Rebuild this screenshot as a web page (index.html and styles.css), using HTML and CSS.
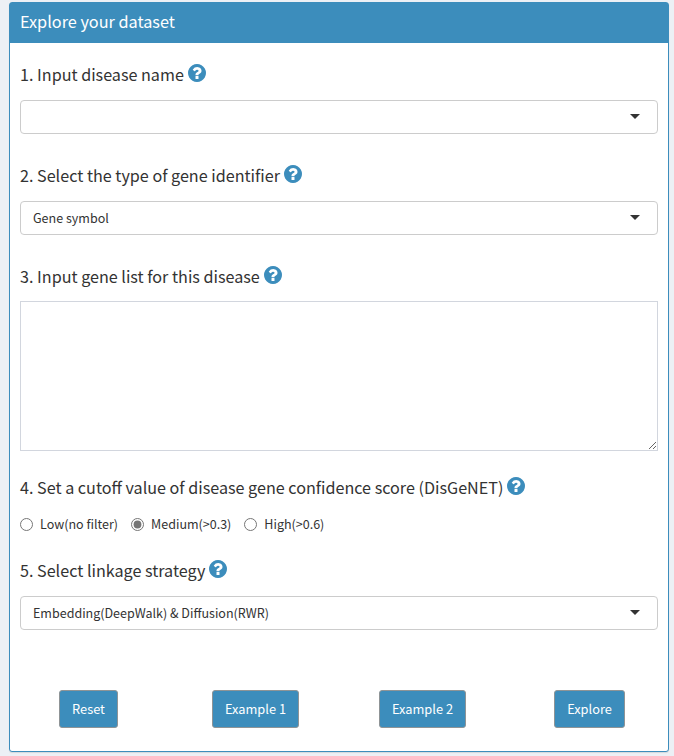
FILE: index.html
```html
<!DOCTYPE html>
<html lang="en">
<head>
<meta charset="utf-8">
<title>Explore your dataset</title>
<link rel="stylesheet" href="styles.css">
</head>
<body>
<svg class="sprite" aria-hidden="true">
  <symbol id="help" viewBox="128 128 1536 1536"><path d="M1024 1376v-192q0-14-9-23t-23-9h-192q-14 0-23 9t-9 23v192q0 14 9 23t23 9h192q14 0 23-9t9-23zm256-672q0-88-55.500-163t-138.500-116-170-41q-243 0-371 213-15 24 8 42l132 100q7 6 19 6 16 0 25-12 53-68 86-92 34-24 86-24 48 0 85.500 26t37.500 59q0 38-20 61t-68 45q-63 28-115.500 86.500t-52.500 125.500v36q0 14 9 23t23 9h192q14 0 23-9t9-23q0-19 21.500-49.500t54.500-49.500q32-18 49-28.500t46-35 44.500-48 28-60.500 12.500-81zm384 192q0 209-103 385.500t-279.500 279.500-385.500 103-385.500-103-279.500-279.500-103-385.500 103-385.500 279.500-279.500 385.500-103 385.500 103 279.500 279.500 103 385.500z"/></symbol>
</svg>
<section class="box">
  <header class="box-header"><h3>Explore your dataset</h3></header>
  <form class="box-body">
    <div class="field">
      <h4><span>1. Input disease name</span><svg class="help"><use href="#help"/></svg></h4>
      <div class="select"><span></span><i class="caret"></i></div>
    </div>
    <div class="field">
      <h4><span>2. Select the type of gene identifier</span><svg class="help"><use href="#help"/></svg></h4>
      <div class="select"><span>Gene symbol</span><i class="caret"></i></div>
    </div>
    <div class="field field-genes">
      <h4><span>3. Input gene list for this disease</span><svg class="help"><use href="#help"/></svg></h4>
      <textarea></textarea>
    </div>
    <div class="field field-cutoff">
      <h4><span>4. Set a cutoff value of disease gene confidence score (DisGeNET)</span><svg class="help"><use href="#help"/></svg></h4>
      <div class="radios">
        <label><input type="radio" name="cutoff"><span>Low(no filter)</span></label>
        <label><input type="radio" name="cutoff" checked><span>Medium(&gt;0.3)</span></label>
        <label><input type="radio" name="cutoff"><span>High(&gt;0.6)</span></label>
      </div>
    </div>
    <div class="field field-strategy">
      <h4><span>5. Select linkage strategy</span><svg class="help"><use href="#help"/></svg></h4>
      <div class="select"><span>Embedding(DeepWalk) &amp; Diffusion(RWR)</span><i class="caret"></i></div>
    </div>
    <div class="actions">
      <button type="button" class="btn reset">Reset</button>
      <button type="button" class="btn example">Example 1</button>
      <button type="button" class="btn example">Example 2</button>
      <button type="button" class="btn explore">Explore</button>
    </div>
  </form>
</section>
</body>
</html>
```
FILE: styles.css
```css
* { box-sizing: border-box; }
body {
  margin: 0;
  height: 756px;
  padding: 2px 5px 4px 9px;
  overflow: hidden;
  background: #ecf0f5;
  color: #333;
  font-family: "Noto Sans CJK SC", sans-serif;
  font-size: 12.52px;
}
.sprite { display: none; }
.box {
  width: 660px;
  height: 750px;
  border: 1px solid #3c8dbc;
  border-radius: 3px;
  background: #fff;
  box-shadow: 0 1px 1px rgba(0, 0, 0, .1);
}
.box-header {
  height: 40px;
  padding: 8px 10px;
  background: #3c8dbc;
  color: #fff;
}
h3, h4 {
  margin: 0;
  font-size: 16.15px;
  font-weight: 400;
  line-height: 20px;
  white-space: nowrap;
}
h3 { font-size: 16.25px; }
.box-body { padding: 22px 10px 0; }
.field { margin-bottom: 32px; }
h4 {
  display: flex;
  align-items: flex-start;
  gap: 4px;
  height: 20px;
  margin-bottom: 15px;
}
h4 span { margin-top: -1px; }
.help {
  width: 18px;
  height: 18px;
  margin-top: -1px;
  fill: #3c8dbc;
}
.select {
  display: flex;
  align-items: center;
  justify-content: space-between;
  height: 34px;
  padding: 0 17px 0 12px;
  border: 1px solid #ccc;
  border-radius: 4px;
  line-height: 20px;
}
.caret {
  margin-bottom: 1px;
  border: 5px solid transparent;
  border-top-color: #333;
  border-bottom: 0;
}
.field-genes { margin-bottom: 27px; }
.field-genes h4 { margin-bottom: 14px; }
textarea {
  display: block;
  width: 100%;
  height: 150px;
  border: 1px solid #d2d6de;
  background: #fff;
  resize: vertical;
}
.field-cutoff { margin-bottom: 30px; }
.field-cutoff h4 { margin-bottom: 20px; }
.radios {
  display: flex;
  gap: 13px;
  height: 13px;
}
.radios label {
  display: flex;
  align-items: center;
  gap: 7px;
}
.radios input { width: 13px; height: 13px; margin: 0; accent-color: #757575; }
.radios span { margin-bottom: 2px; line-height: 13px; white-space: nowrap; }
.field-strategy { margin-bottom: 60px; }
.actions {
  display: flex;
  padding-left: 39px;
}
.btn {
  height: 38px;
  padding: 0 0 2px;
  border: 1px solid #8f9496;
  border-radius: 3px;
  background: #3c8dbc;
  color: #fff;
  font: inherit;
  font-size: 12.8px;
}
.reset { width: 59px; margin-right: 94px; }
.example { width: 87px; margin-right: 80px; }
.explore { width: 71px; margin-left: 8px; }
```
